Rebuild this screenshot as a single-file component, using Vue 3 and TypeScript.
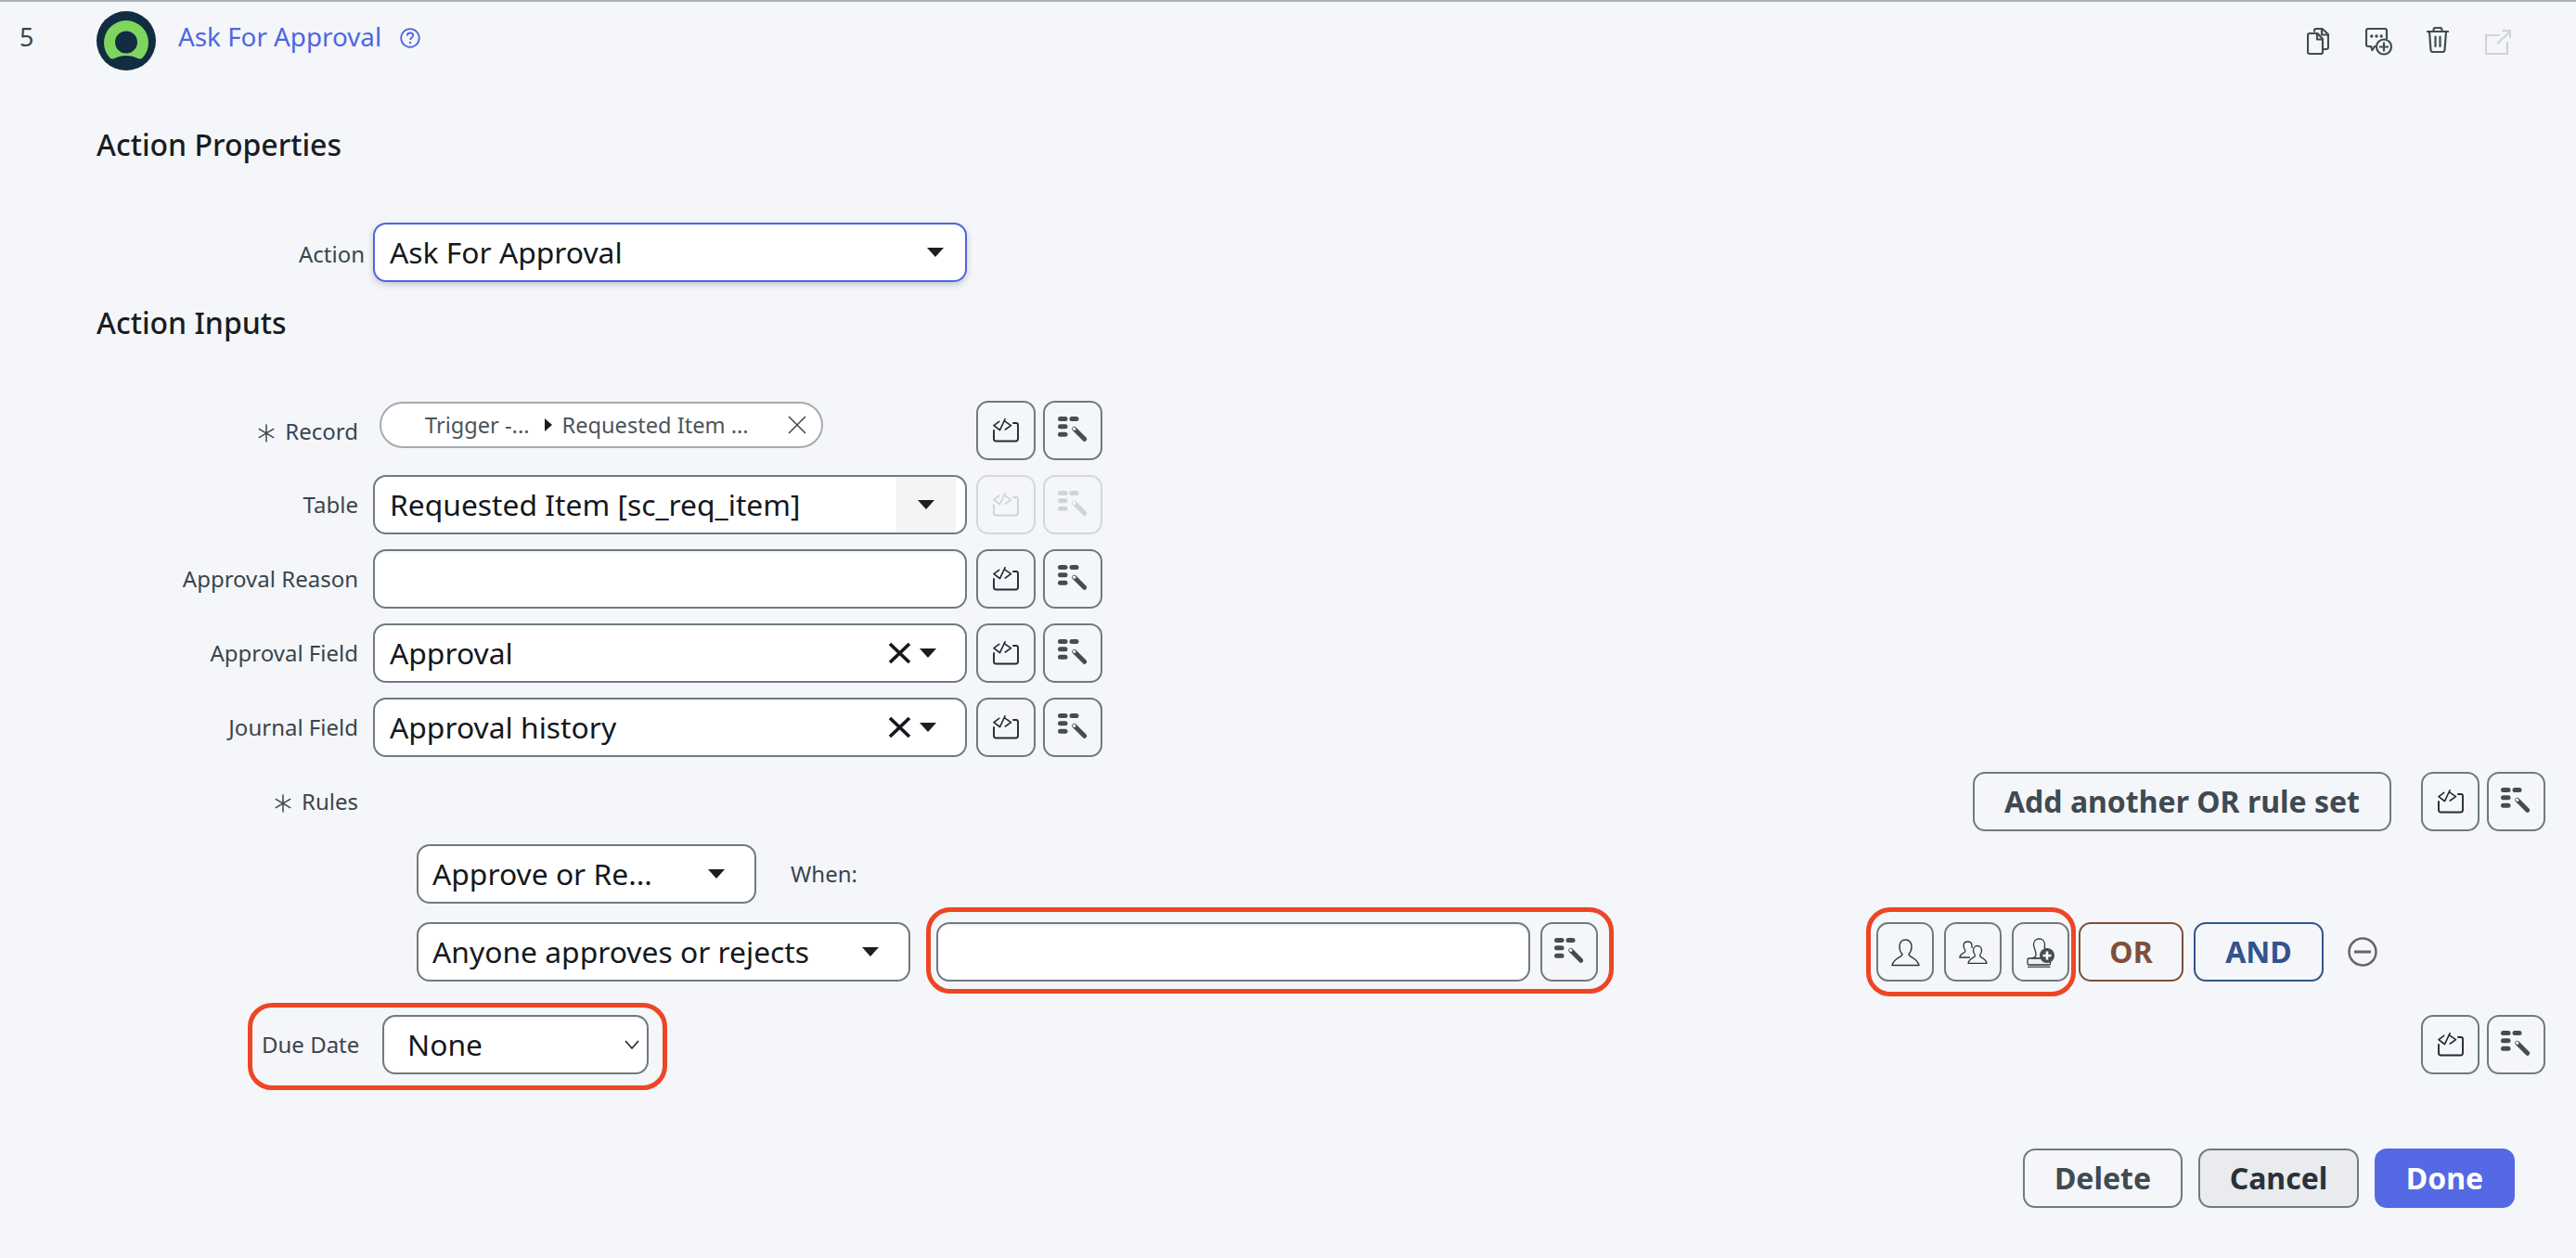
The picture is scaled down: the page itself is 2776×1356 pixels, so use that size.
<script setup lang="ts">
interface Field {
  label: string
  value?: string
  clear?: boolean
  grey?: boolean
  input?: boolean
  off?: boolean
}

const fields: Field[] = [
  { label: 'Table', value: 'Requested Item [sc_req_item]', grey: true, off: true },
  { label: 'Approval Reason', input: true },
  { label: 'Approval Field', value: 'Approval', clear: true },
  { label: 'Journal Field', value: 'Approval history', clear: true },
]
</script>

<template>
  <div class="page">
    <!-- shared icons -->
    <svg class="sprite" aria-hidden="true">
      <defs>
        <symbol id="i-script" viewBox="0 0 28 26">
          <g fill="none" stroke="currentColor" stroke-linecap="round" stroke-linejoin="round">
            <path d="M6.700 3.300 1 7.700 6.700 12M13 0.800 7.500 12.700M13.300 3.300 19.500 7.700 13.300 12" stroke-width="1.600" />
            <path d="M1 13V22q0 2.500 2.500 2.500H24.500q2.500 0 2.500-2.500V7q0-2-2-2H22" stroke-width="1.900" />
          </g>
        </symbol>
        <symbol id="i-wand" viewBox="0 0 33 28">
          <g fill="currentColor">
            <rect x="0" y="0" width="10.500" height="5" rx="2.500" />
            <rect x="12.500" y="0" width="10" height="5" rx="2.500" />
            <rect x="0" y="8.300" width="10.500" height="5" rx="2.500" />
            <rect x="0" y="16.700" width="10.500" height="5" rx="2.500" />
          </g>
          <path d="M17.700 13.300 28.700 24.300" stroke="currentColor" stroke-width="5" stroke-linecap="round" />
          <ellipse cx="17.700" cy="13.300" rx="1.800" ry="1.500" fill="#fff" transform="rotate(45 17.700 13.300)" />
        </symbol>
        <symbol id="i-user" viewBox="0 0 31 30">
          <path
            d="M15.500 1C11.500 1 9 4 9 8.500C9 12 10.500 15 12 16.500C12 20 3 20 1 28.500H30C28 20 19 20 19 16.500C20.500 15 22 12 22 8.500C22 4 19.500 1 15.500 1Z"
            fill="none" stroke="currentColor" stroke-width="1.400" stroke-linejoin="round"
          />
        </symbol>
        <symbol id="i-users" viewBox="0 0 31 26">
          <g fill="none" stroke="currentColor" stroke-width="1.300" stroke-linejoin="round">
            <path d="M9.500 1C6.500 1 5 3 5 5.500C5 8 6.500 9.500 7 11C7 13.500 1.500 13 0.800 18H12M9.500 1C12.500 1 14 3 14 5.500V8" />
            <path d="M20 5.500C17.500 5.500 15.500 7.500 15.500 10.500C15.500 13 17 14.500 17.500 16C17.500 18.500 11 18.500 10 24.300H30C29 18.500 22.500 18.500 22.500 16C23 14.500 24.500 13 24.500 10.500C24.500 7.500 22.500 5.500 20 5.500Z" fill="#f4f6f9" />
          </g>
        </symbol>
        <symbol id="i-stamp" viewBox="0 0 30 33">
          <g fill="none" stroke="currentColor" stroke-width="1.300" stroke-linejoin="round">
            <path d="M13.500 1C10 1 7.500 3.500 7.500 7C7.500 11 10 13 10 18C10 20 9 21.500 5 22H22V12C18 11.500 19.500 9 19.500 7C19.500 3.500 17 1 13.500 1Z" />
            <rect x="1" y="22" width="24.500" height="7" rx="1.500" fill="#eceef0" />
          </g>
          <path d="M1 31.300H25.500" stroke="currentColor" stroke-width="1.700" opacity=".75" />
          <circle cx="22" cy="19" r="8" fill="#444e50" />
          <path d="M22 14.500V23.500M17.500 19H26.500" stroke="#fff" stroke-width="2.600" />
        </symbol>
        <symbol id="i-req" viewBox="0 0 20 20">
          <path d="M10 0.500V19.500M1.800 5.200 18.200 14.800M18.200 5.200 1.800 14.800" stroke="currentColor" stroke-width="1.500" />
        </symbol>
      </defs>
    </svg>

    <header class="head">
      <span class="num">5</span>
      <svg class="logo" viewBox="0 0 64 64" aria-hidden="true">
        <circle cx="32" cy="32" r="32" fill="#122c41" />
        <path d="M15 51A24 24 0 1 1 49 51C45 53 42 48 32 48C22 48 19 53 15 51Z" fill="#7fd65f" />
        <circle cx="32" cy="33.500" r="12" fill="#122c41" />
      </svg>
      <span class="title">Ask For Approval</span>
      <svg class="help" viewBox="0 0 22 22" aria-hidden="true">
        <circle cx="11" cy="11" r="9.800" fill="none" stroke="currentColor" stroke-width="1.800" />
        <path d="M7.800 8.500C7.800 6.500 9.300 5.500 11 5.500C12.800 5.500 14.200 6.600 14.200 8.300C14.200 10.500 11 10.500 11 13" fill="none" stroke="currentColor" stroke-width="1.800" />
        <circle cx="11" cy="16" r="1.200" fill="currentColor" />
      </svg>
      <div class="tools">
        <svg class="tool" viewBox="0 0 24 30" aria-hidden="true">
          <g fill="none" stroke="currentColor" stroke-width="2.200" stroke-linejoin="round">
            <path d="M8 4.500V3q0-2 2-2h6.500L23 7V21q0 2-2 2H18" />
            <path d="M1 8q0-2 2-2h8.500L17 12V26q0 2-2 2H3q-2 0-2-2Z" />
            <path d="M11 6V12.500H17M16 1V7.500H23" />
          </g>
        </svg>
        <svg class="tool" viewBox="0 0 30 30" aria-hidden="true">
          <path d="M17 20H10L7.500 24 6 20H3q-2 0-2-2V3q0-2 2-2H21q2 0 2 2V12" fill="none" stroke="currentColor" stroke-width="2.200" stroke-linejoin="round" />
          <circle cx="6.800" cy="9" r="1.700" fill="currentColor" />
          <circle cx="12" cy="9" r="1.700" fill="currentColor" />
          <circle cx="17.200" cy="9" r="1.700" fill="currentColor" />
          <circle cx="20" cy="20.500" r="8" fill="#f4f6f9" stroke="currentColor" stroke-width="2.200" />
          <path d="M20 15.500V25.500M15 20.500H25" stroke="currentColor" stroke-width="2.200" />
        </svg>
        <svg class="tool tool-bin" viewBox="0 0 24 28" aria-hidden="true">
          <g fill="none" stroke="currentColor" stroke-width="2.200" stroke-linecap="round" stroke-linejoin="round">
            <path d="M0.800 5H23.200M7.500 5V3q0-2 2-2h5q2 0 2 2V5" />
            <path d="M3 5 4.500 25q0.200 2 2.200 2H17.300q2 0 2.200-2L21 5" />
            <path d="M9.500 10.500V21M14.500 10.500V21" />
          </g>
        </svg>
        <svg class="tool tool-out" viewBox="0 0 28 27" aria-hidden="true">
          <g fill="none" stroke="currentColor" stroke-width="2.200">
            <path d="M16 6H1V26H24V13" />
            <path d="M13 15 27 2M18.500 1.200H27V9" />
          </g>
        </svg>
      </div>
    </header>

    <main class="body">
      <h2 class="heading heading-props">Action Properties</h2>
      <div class="row row-action">
        <label class="label label-action">Action</label>
        <div class="select select-active">
          <span class="val">Ask For Approval</span>
          <i class="caret" />
        </div>
      </div>

      <h2 class="heading heading-inputs">Action Inputs</h2>

      <div class="form">
        <div class="row">
          <label class="label label-low"><svg class="req"><use href="#i-req" /></svg>Record</label>
          <div class="slot">
            <div class="pill">
              <span>Trigger -...</span>
              <i class="crumb" />
              <span>Requested Item ...</span>
              <svg class="pill-x" viewBox="0 0 20 20" aria-hidden="true">
                <path d="M1 1 19 19M19 1 1 19" stroke="currentColor" stroke-width="1.500" />
              </svg>
            </div>
          </div>
          <button class="btn"><svg class="ic-script"><use href="#i-script" /></svg></button>
          <button class="btn"><svg class="ic-wand"><use href="#i-wand" /></svg></button>
        </div>

        <div v-for="f in fields" :key="f.label" class="row">
          <label class="label">{{ f.label }}</label>
          <input v-if="f.input" class="select slot-input" type="text" />
          <div v-else class="select">
            <span class="val">{{ f.value }}</span>
            <svg v-if="f.clear" class="clear" viewBox="0 0 25 22" aria-hidden="true">
              <path d="M2 1 23 21M23 1 2 21" stroke="currentColor" stroke-width="3.600" />
            </svg>
            <span v-if="f.grey" class="grey-zone"><i class="caret" /></span>
            <i v-else class="caret" />
          </div>
          <button class="btn" :class="{ off: f.off }"><svg class="ic-script"><use href="#i-script" /></svg></button>
          <button class="btn" :class="{ off: f.off }"><svg class="ic-wand"><use href="#i-wand" /></svg></button>
        </div>

        <div class="row row-rules">
          <label class="label"><svg class="req"><use href="#i-req" /></svg>Rules</label>
          <div class="end">
            <button class="btn btn-text btn-add">Add another OR rule set</button>
            <div class="pair">
              <button class="btn"><svg class="ic-script"><use href="#i-script" /></svg></button>
              <button class="btn"><svg class="ic-wand"><use href="#i-wand" /></svg></button>
            </div>
          </div>
        </div>

        <div class="row rule rule-type">
          <div class="select select-type">
            <span class="val">Approve or Re...</span>
            <i class="caret" />
          </div>
          <span class="when">When:</span>
        </div>

        <div class="row rule rule-main">
          <div class="select select-who">
            <span class="val">Anyone approves or rejects</span>
            <i class="caret" />
          </div>
          <div class="group mark mark-input">
            <input class="select who-input" type="text" />
            <button class="btn btn-lo"><svg class="ic-wand"><use href="#i-wand" /></svg></button>
          </div>
          <div class="group mark mark-people">
            <button class="btn btn-lo"><svg class="ic-user"><use href="#i-user" /></svg></button>
            <button class="btn btn-lo"><svg class="ic-users"><use href="#i-users" /></svg></button>
            <button class="btn btn-lo"><svg class="ic-stamp"><use href="#i-stamp" /></svg></button>
          </div>
          <button class="btn btn-text btn-or">OR</button>
          <button class="btn btn-text btn-and">AND</button>
          <svg class="minus" viewBox="0 0 32 32" aria-hidden="true">
            <circle cx="16" cy="16" r="14.500" fill="none" stroke="currentColor" stroke-width="2.500" />
            <path d="M7 16H25" stroke="currentColor" stroke-width="3" />
          </svg>
        </div>

        <div class="row row-due">
          <div class="mark mark-due due">
            <label class="label-due">Due Date</label>
            <div class="select select-due">
              <span class="val">None</span>
              <svg class="chev" viewBox="0 0 16 10" aria-hidden="true">
                <path d="M1 1 8 9 15 1" fill="none" stroke="currentColor" stroke-width="1.500" />
              </svg>
            </div>
          </div>
          <div class="end pair">
            <button class="btn"><svg class="ic-script"><use href="#i-script" /></svg></button>
            <button class="btn"><svg class="ic-wand"><use href="#i-wand" /></svg></button>
          </div>
        </div>
      </div>

      <footer class="foot">
        <button class="btn btn-text btn-delete">Delete</button>
        <button class="btn btn-text btn-cancel">Cancel</button>
        <button class="btn btn-text btn-done">Done</button>
      </footer>
    </main>
  </div>
</template>

<style>
html,
body {
  margin: 0;
  background: #f4f6f9;
}
</style>

<style scoped>
* {
  box-sizing: border-box;
}

.page {
  min-height: 1356px;
  background: #f4f6f9;
  border-top: 2px solid #a9b1b8;
  font-family: "Noto Sans", "Open Sans", sans-serif;
  color: #181d22;
  overflow: hidden;
}

.sprite {
  position: absolute;
  width: 0;
  height: 0;
}

/* ── Header ── */
.head {
  display: flex;
  align-items: flex-start;
  height: 84px;
  padding: 10px 33px 0 21px;
}

.num {
  width: 83px;
  margin-top: 10px;
  font-size: 27px;
  line-height: 36px;
  color: #3b454c;
}

.logo {
  width: 64px;
  height: 64px;
  margin-right: 24px;
}

.title {
  margin-top: 8px;
  font-size: 27.800px;
  line-height: 38px;
  color: #4f66e0;
}

.help {
  width: 22px;
  height: 22px;
  margin: 18px 0 0 20px;
  color: #4f66e0;
}

.tools {
  display: flex;
  align-items: flex-start;
  gap: 39px;
  margin-left: auto;
  margin-right: 37px;
  padding-top: 18px;
  color: #3f4c50;
}

.tool {
  width: 24px;
  height: 30px;
  transform: translateX(3px);
}

.tool:nth-child(2) {
  width: 30px;
}

.tool-bin {
  height: 28px;
  margin-top: -1px;
  transform: none;
}

.tool-out {
  width: 28px;
  height: 27px;
  margin-top: 2px;
  color: #d0d2d3;
  transform: none;
}

/* ── Body ── */
.heading {
  margin: 0 0 0 104px;
  font-size: 32px;
  line-height: 44px;
  font-weight: 500;
  color: #181d22;
}

.heading-props {
  margin-top: 48px;
  margin-bottom: 62px;
}

.heading-inputs {
  margin-top: 22px;
  margin-bottom: 62px;
}

.form {
  display: flex;
  flex-direction: column;
  gap: 16px;
}

.row {
  display: flex;
  align-items: center;
  height: 64px;
}

.row > .btn + .btn {
  margin-left: 8px;
}

.label {
  flex: none;
  width: 386px;
  margin-right: 16px;
  text-align: right;
  font-size: 24px;
  line-height: 32px;
  color: #3a444c;
}

.label-action {
  width: 393px;
  margin-right: 9px;
  padding-top: 4px;
}

.label-low {
  padding-top: 2px;
}

.req {
  width: 20px;
  height: 20px;
  margin-right: 10px;
  vertical-align: -3px;
  color: #3a444c;
}

/* ── Controls ── */
.select {
  display: flex;
  align-items: center;
  flex: none;
  width: 640px;
  height: 64px;
  padding: 0 17px 0 16px;
  background: #fff;
  border: 2px solid #6f7a81;
  border-radius: 14px;
  font-family: inherit;
  outline: none;
}

.select-active {
  border-color: #4f66e0;
  box-shadow: 0 3px 7px rgba(30, 40, 70, 0.22);
}

.select-active .caret {
  margin-right: 6px;
}

.slot-input,
.who-input {
  box-shadow: inset 0 2px 2px rgba(0, 0, 0, 0.05);
}

.val {
  flex: 1;
  font-size: 31.800px;
  line-height: 44px;
  color: #14181c;
  white-space: nowrap;
}

.caret {
  flex: none;
  width: 0;
  height: 0;
  margin-right: 14px;
  border-left: 9px solid transparent;
  border-right: 9px solid transparent;
  border-top: 10px solid #1a1f24;
}

.grey-zone {
  display: flex;
  align-items: center;
  justify-content: center;
  align-self: stretch;
  width: 64px;
  margin-right: -7px;
  background: #f4f4f4;
}

.grey-zone .caret {
  margin-right: 0;
}

.clear {
  flex: none;
  width: 25px;
  height: 22px;
  margin-right: 9px;
  color: #14181c;
}

.slot {
  flex: none;
  display: flex;
  align-self: flex-start;
  width: 640px;
  padding: 1px 0 0 7px;
}

.pill {
  display: flex;
  align-items: center;
  width: 478px;
  height: 50px;
  padding: 0 16px 0 47px;
  background: #fff;
  border: 2px solid #a4abb0;
  border-radius: 25px;
  font-size: 23.600px;
  color: #4b555c;
  white-space: nowrap;
}

.crumb {
  width: 0;
  height: 0;
  margin: 0 11px 0 16px;
  border-top: 7px solid transparent;
  border-bottom: 7px solid transparent;
  border-left: 8px solid #1a1f24;
}

.pill-x {
  width: 20px;
  height: 20px;
  margin-left: auto;
  color: #3a444c;
}

.btn {
  flex: none;
  display: flex;
  align-items: center;
  justify-content: center;
  width: 64px;
  height: 64px;
  margin-left: 10px;
  padding: 0;
  background: transparent;
  border: 2px solid #6f7a81;
  border-radius: 13px;
  color: #444e50;
  font-family: inherit;
}

.btn.off {
  border-color: #d5d8da;
  color: #d0d3d5;
}

.btn-lo {
  width: 62px;
  margin-left: 0;
}

.ic-script {
  width: 28px;
  height: 26px;
  color: #1f2d38;
  margin-top: -1px;
}

.btn.off .ic-script {
  color: #d0d3d5;
}

.ic-wand {
  width: 33px;
  height: 28px;
  margin-top: -2px;
}

.ic-user {
  width: 31px;
  height: 30px;
  margin-top: 2px;
  color: #2c383f;
}

.ic-users {
  width: 31px;
  height: 26px;
  margin-top: 2px;
  color: #2c383f;
}

.ic-stamp {
  width: 30px;
  height: 33px;
  margin-top: 2px;
  color: #2c383f;
}

.btn-text {
  width: auto;
  font-weight: 700;
  font-size: 32px;
  line-height: 44px;
  color: #3f4a52;
}

/* ── Rules ── */
.end {
  display: flex;
  align-items: center;
  margin-left: auto;
  padding-right: 33px;
}

.pair {
  display: flex;
  gap: 8px;
}

.pair .btn {
  width: 63px;
  margin-left: 0;
}

.end .pair {
  margin-left: 32px;
}

.btn-add {
  width: 451px;
  margin-left: 0;
}

.rule {
  padding-left: 449px;
}

.rule-type {
  margin-top: -2px;
}

.rule-main {
  margin-top: 4px;
}

.select-type {
  width: 366px;
  padding-left: 15px;
}

.select-who {
  width: 532px;
  padding-left: 15px;
}

.select-type .caret,
.select-who .caret {
  margin-right: 15px;
}

.when {
  margin-left: 37px;
  font-size: 24px;
  line-height: 32px;
  color: #3a444c;
}

.group {
  display: flex;
  gap: 11px;
  flex: none;
}

.mark-input {
  margin-left: 28px;
}

.who-input {
  width: 640px;
}

.mark-people {
  margin-left: 300px;
}

.mark {
  position: relative;
}

/* red review annotations drawn over the screenshot */
.mark::after {
  content: "";
  position: absolute;
  border: 5px solid #ee4525;
  border-radius: 26px;
  pointer-events: none;
}

.mark-input::after {
  inset: -16px -17px -13px -11px;
}

.mark-people::after {
  inset: -16px -7px -16px -11px;
}

.mark-due::after {
  inset: -13px -20px -17px -15px;
}

.btn-or {
  width: 113px;
  color: #7f4f3a;
  border-color: #7f4f3a;
}

.btn-and {
  width: 140px;
  color: #34538c;
  border-color: #34538c;
}

.row > .btn-or + .btn-and {
  margin-left: 11px;
}

.minus {
  flex: none;
  width: 32px;
  height: 32px;
  margin-left: 26px;
  color: #666;
}

/* ── Due date ── */
.row-due {
  margin-top: 20px;
}

.due {
  display: flex;
  align-items: center;
  margin-left: 282px;
}

.label-due {
  width: 130px;
  font-size: 24px;
  line-height: 32px;
  color: #3a444c;
}

.select-due {
  width: 287px;
  padding: 0 8px 0 25px;
  box-shadow: inset 0 2px 2px rgba(0, 0, 0, 0.05);
}

.chev {
  flex: none;
  width: 16px;
  height: 10px;
  color: #1a1f24;
}

/* ── Footer ── */
.foot {
  display: flex;
  justify-content: flex-end;
  gap: 17px;
  margin-top: 80px;
  padding-right: 66px;
}

.foot .btn {
  margin-left: 0;
}

.btn-delete {
  width: 172px;
}

.btn-cancel {
  width: 173px;
  background: #e9ebee;
  color: #2a3239;
}

.btn-done {
  width: 151px;
  background: #5469e3;
  border-color: #5469e3;
  color: #fff;
}
</style>
